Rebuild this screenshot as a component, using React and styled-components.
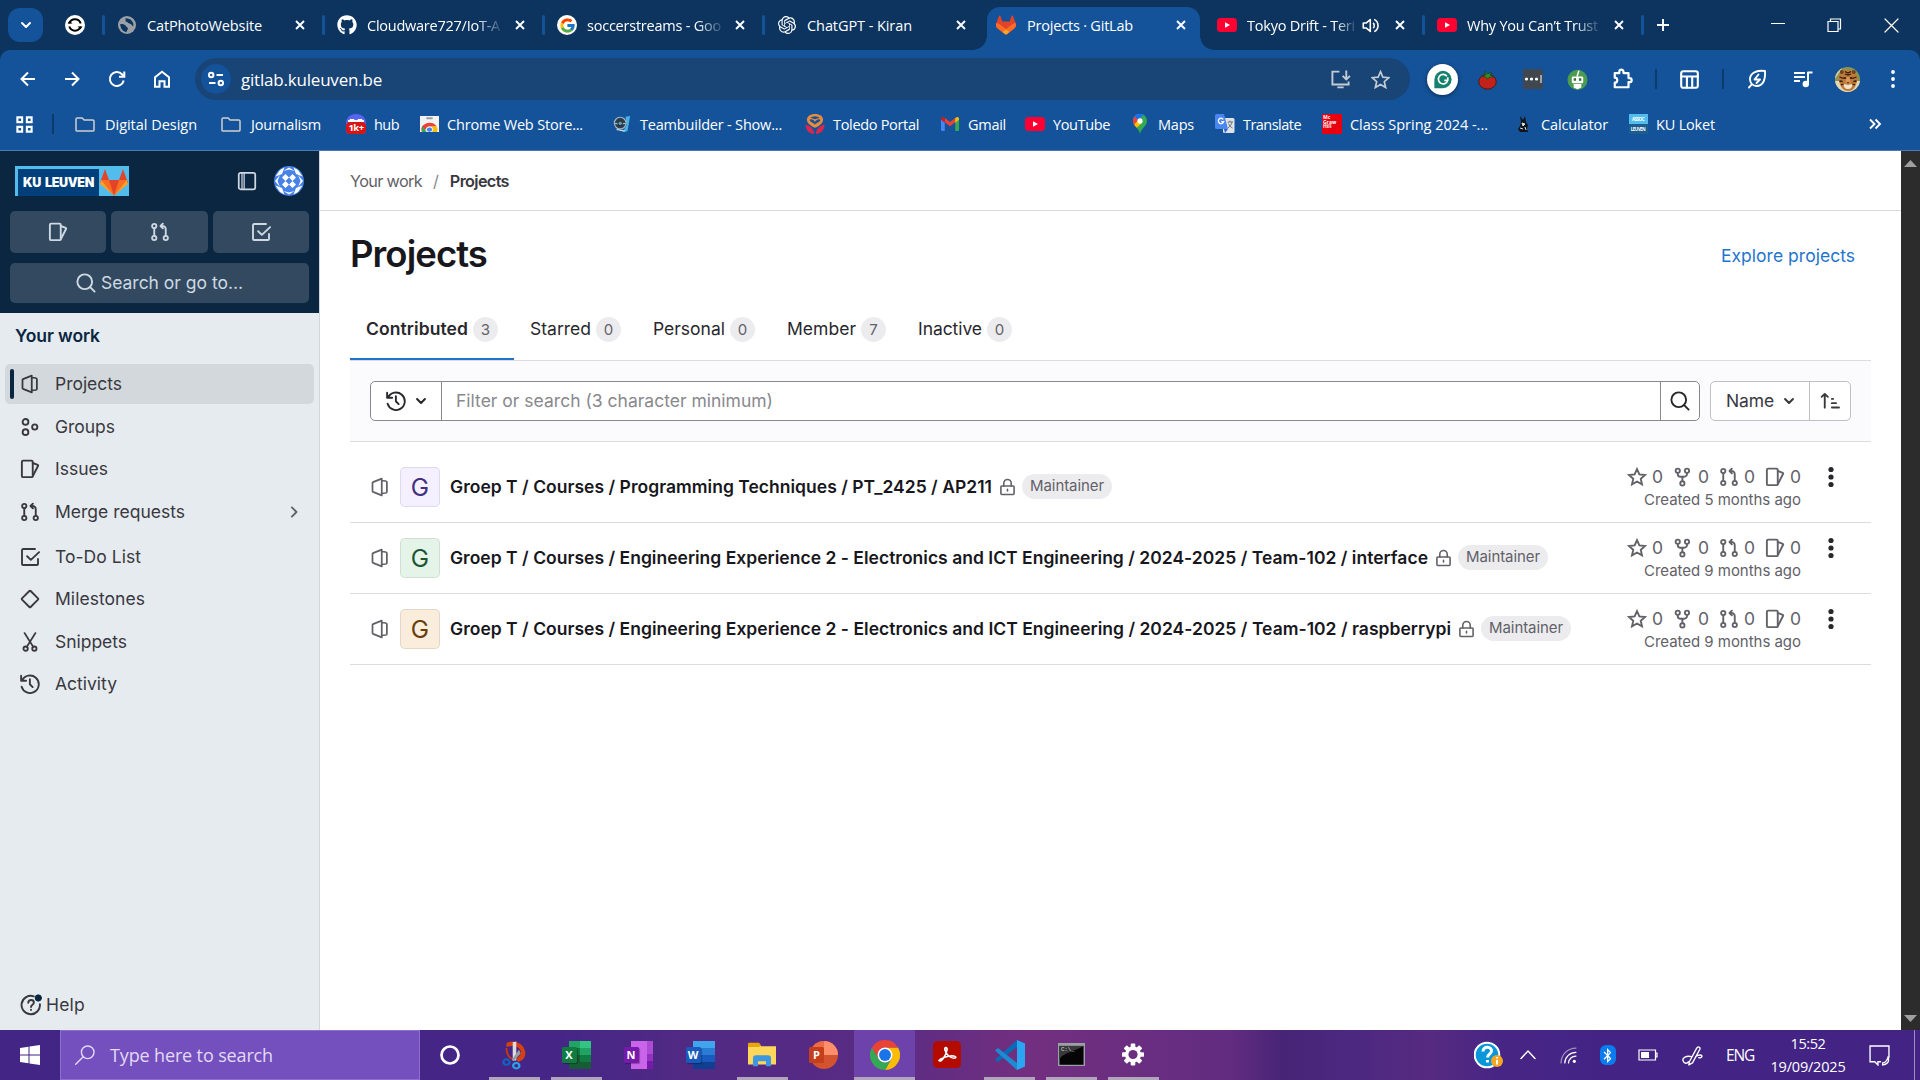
import React, { useLayoutEffect, useRef } from 'react';
import styled, { createGlobalStyle } from 'styled-components';
import { FcGoogle } from 'react-icons/fc';
import { FaGithub, FaBluetoothB } from 'react-icons/fa';
import { SiOpenai } from 'react-icons/si';

const UI = '"Open Sans", "Noto Sans", sans-serif';
const GL = 'Inter, "Noto Sans", sans-serif';

const Global = createGlobalStyle`
  * { box-sizing: border-box; }
  body { margin: 0; background: #fff; }
  svg { display: block; flex: none; }
`;

/* ---------- shared ---------- */
const Label = styled.span`
  display: block;
  flex: none;
  white-space: pre;
  width: ${p => (p.$w ? p.$w + 'px' : 'auto')};
  mask-image: ${p => (p.$fade ? 'linear-gradient(90deg,#000 82%,rgba(0,0,0,.15) 100%)' : 'none')};
`;

/* Tracks its text so that it fills exactly `w` pixels. */
function Fit({ w, fade, children }) {
  const ref = useRef(null);
  useLayoutEffect(() => {
    const el = ref.current;
    el.style.letterSpacing = '0px';
    const r = document.createRange();
    r.selectNodeContents(el);
    const n = el.textContent.length;
    el.style.letterSpacing = (w - r.getBoundingClientRect().width) / n + 'px';
  }, [w, children]);
  return <Label ref={ref} $w={w} $fade={fade}>{children}</Label>;
}

const Svg = ({ s = 20, vb = 16, w = 1.5, h, children, ...r }) => (
  <svg width={s} height={h || s} viewBox={typeof vb === 'string' ? vb : `0 0 ${vb} ${vb}`} fill="none"
    stroke="currentColor" strokeWidth={w} strokeLinecap="round" strokeLinejoin="round" {...r}>{children}</svg>
);

const Slot = styled.div`
  flex: none;
  width: ${p => p.$w}px;
  display: flex;
  align-items: center;
  justify-content: center;
`;

const Spacer = styled.div`
  flex: ${p => (p.$w ? 'none' : 1)};
  width: ${p => p.$w || 0}px;
`;

/* ---------- GitLab icons ---------- */
const IssueI = p => <Svg {...p}><rect x="1.5" y="1.3" width="8.7" height="13.2" rx="1" /><path d="M10.2 3.2l4 1.5c.3.1.4.4.3.7l-4.1 8" /></Svg>;
const MergeI = p => <Svg {...p}><circle cx="3.4" cy="3.2" r="1.7" /><circle cx="3.4" cy="12.8" r="1.7" /><circle cx="12.6" cy="12.8" r="1.7" /><path d="M3.4 5v6M12.6 11V5.7a2.5 2.5 0 0 0-2.5-2.5H8.6M10.3 1.3L8.4 3.2l1.9 1.9" /></Svg>;
const TodoI = p => <Svg {...p}><path d="M12 1.6H2.5a.9.9 0 0 0-.9.9v11c0 .5.4.9.9.9h11c.5 0 .9-.4.9-.9V9.6M5.7 7.4l3 2.9 6.6-6.2" /></Svg>;
const ProjectI = p => <Svg {...p} w={1.4}><path d="M9.4 1.3v13.400l-7-2.800a.6.6 0 0 1-.4-.6V4.700c0-.3.1-.5.4-.6zM9.600 2.800l2.900.4c.6.1 1 .5 1 1v7.600c0 .5-.4.9-1 1l-2.900.4" /></Svg>;
const GroupI = p => <Svg {...p}><circle cx="4.4" cy="3.9" r="2.3" /><circle cx="4.4" cy="12.1" r="2.3" /><circle cx="11.8" cy="8" r="2.1" /></Svg>;
const MilestoneI = p => <Svg {...p}><path d="M7.5 1.6a.7.7 0 0 1 1 0l5.9 5.9a.7.7 0 0 1 0 1l-5.9 5.9a.7.7 0 0 1-1 0L1.600 8.500a.7.7 0 0 1 0-1z" /></Svg>;
const SnippetI = p => <Svg {...p}><circle cx="4.5" cy="13.3" r="1.7" /><circle cx="11.5" cy="13.3" r="1.7" /><path d="M3.7.9l6.900 11M12.300.9L5.400 11.900" /></Svg>;
const HistoryI = p => <Svg {...p}><path d="M1.700 5.200A7 7 0 1 1 1.300 10.200M.9 1.400v4h4M7.900 4.200v4l2.200 2.300" /></Svg>;
const SearchI = p => <Svg {...p}><circle cx="7" cy="7" r="5.900" /><path d="M11.300 11.300l3.600 3.600" /></Svg>;
const StarI = p => <Svg {...p}><path d="M8 1.700l1.900 4.200 4.500.5-3.400 3 1 4.500L8 11.600l-4 2.300 1-4.500-3.400-3 4.500-.5z" strokeLinejoin="miter" /></Svg>;
const ForkI = p => <Svg {...p}><circle cx="3.800" cy="3" r="1.700" /><circle cx="11.200" cy="3" r="1.700" /><circle cx="7.500" cy="13.100" r="1.700" /><path d="M3.800 4.800v.7a2.300 2.300 0 0 0 2.300 2.300h2.800a2.300 2.300 0 0 0 2.300-2.300v-.7M7.500 8v3.300" /></Svg>;
const LockI = p => <Svg {...p}><rect x="1.800" y="7" width="12.400" height="8" rx=".8" /><path d="M4.500 7V4.500a3.500 3.500 0 0 1 7 0V7M8 10.200v1.600" /></Svg>;
const ChevI = p => <Svg {...p}><path d="M4.500 6.300L8 9.800l3.500-3.500" /></Svg>;
const ChevR = p => <Svg {...p}><path d="M6.300 4.300L10 8l-3.700 3.700" /></Svg>;
const SortI = p => <Svg {...p}><path d="M3.800 13.300V2.500M1.300 4.700l2.500-2.400 2.500 2.400M9.500 6.300h1M9.500 9.700h3.300M9.500 13.200h5.700" /></Svg>;

const Tanuki = ({ s = 22 }) => (
  <svg width={s} height={s} viewBox="0 0 25 24">
    <path d="m24.507 9.5-.034-.09L21.082.562a.896.896 0 0 0-1.694.091l-2.29 7.01H7.825L5.535.653a.898.898 0 0 0-1.694-.09L.451 9.411.416 9.5a6.297 6.297 0 0 0 2.09 7.278l.042.032 5.160 3.867 2.560 1.935 1.554 1.176a1.051 1.051 0 0 0 1.268 0l1.555-1.176 2.560-1.935 5.197-3.890.014-.01A6.297 6.297 0 0 0 24.507 9.500Z" fill="#E24329" />
    <path d="m24.507 9.5-.034-.09a11.440 11.440 0 0 0-4.560 2.051l-7.447 5.632 4.742 3.584 5.197-3.890.014-.01A6.297 6.297 0 0 0 24.507 9.500Z" fill="#FC6D26" />
    <path d="m7.707 20.677 2.560 1.935 1.555 1.176a1.051 1.051 0 0 0 1.268 0l1.555-1.176 2.560-1.935-4.743-3.584-4.755 3.584Z" fill="#FCA326" />
    <path d="M5.010 11.461a11.430 11.430 0 0 0-4.560-2.050L.416 9.500a6.297 6.297 0 0 0 2.090 7.278l.042.032 5.160 3.867 4.745-3.584-7.443-5.632Z" fill="#FC6D26" />
  </svg>
);

/* ---------- browser tab strip ---------- */
const Screen = styled.div`
  width: 1920px;
  height: 1080px;
  overflow: hidden;
  display: flex;
  flex-direction: column;
  font-family: ${UI};
`;
const Strip = styled.div`
  height: 50px;
  flex: none;
  background: #0c345f;
  color: #fff;
  display: flex;
  align-items: center;
  padding-left: 8px;
  font-size: 14.5px;
`;
const TabMenu = styled.div`
  width: 35px;
  height: 34px;
  border-radius: 12px;
  background: #14539a;
  display: flex;
  align-items: center;
  justify-content: center;
`;
const TabBox = styled.div`
  width: ${p => p.$w}px;
  height: 50px;
  flex: none;
  display: flex;
  align-items: center;
  padding: 0 16px 0 12px;
`;
const TabSep = styled.div`
  width: 3px;
  height: 20px;
  flex: none;
  border-radius: 2px;
  background: ${p => (p.$off ? 'transparent' : '#14539a')};
`;
const ActiveTab = styled.div`
  flex: none;
  width: 213px;
  height: 43px;
  margin: 7px 2px 0 4px;
  padding: 0 13px 7px 9px;
  background: #14539a;
  border-radius: 13px 13px 0 0;
  display: flex;
  align-items: center;
  position: relative;
  &::before, &::after {
    content: '';
    position: absolute;
    bottom: 0;
    width: 14px;
    height: 14px;
  }
  &::before { left: -14px; background: radial-gradient(circle at 0 0, transparent 13.500px, #14539a 14px); }
  &::after { right: -14px; background: radial-gradient(circle at 100% 0, transparent 13.500px, #14539a 14px); }
`;
const CloseX = () => <Svg s={12} vb={12} w={1.9}><path d="M2 2l8 8M10 2l-8 8" strokeLinecap="butt" /></Svg>;
const YT = () => <svg width="20" height="14" viewBox="0 0 20 14"><rect width="20" height="14" rx="3.500" fill="#f03" /><path d="M8 4.200l5 2.800-5 2.800z" fill="#fff" /></svg>;
const Globe = () => (
  <svg width="18" height="18" viewBox="0 0 20 20"><circle cx="10" cy="10" r="10" fill="#9aa0a6" />
    <path d="M2.500 9c3 0 6 .5 6.500 2.500.4 1.500 2 .8 2 2.500 0 1.500-1.500 2-1.500 4-4-.5-7-4-7-9zM8 2.500c1.500 2-1 3 1.500 4 2 .8 1.500 2 4 2 2 .1 1.500 2.500 3.500 3 1-4-2-9-9-9z" fill="#0c345f" /></svg>
);

function Tab({ icon, text, tw, fade, w, audio, off }) {
  return (
    <>
      <TabSep $off={off} />
      <TabBox $w={w}>
        <Slot $w={20}>{icon}</Slot>
        <Spacer $w={10} />
        <Fit w={tw} fade={fade}>{text}</Fit>
        <Spacer />
        {audio && <><Svg s={17} w={1.5}><path d="M1.200 5.700v4.600h2.600l4 3.300V2.400l-4 3.300zM10.500 5.500a3.500 3.500 0 0 1 0 5M11.500 2.200a6.500 6.500 0 0 1 0 11.600" strokeLinecap="butt" /></Svg><Spacer $w={15} /></>}
        <CloseX />
      </TabBox>
    </>
  );
}

const Disc = styled.div`
  width: 20px;
  height: 20px;
  border-radius: 50%;
  background: #fff;
  display: flex;
  align-items: center;
  justify-content: center;
`;

function TabStrip() {
  return (
    <Strip>
      <TabMenu><Svg s={14} vb={14} w={2}><path d="M3 5l4 4 4-4" /></Svg></TabMenu>
      <Slot $w={59}>
        <Spacer $w={5} />
        <svg width="20" height="20" viewBox="0 0 20 20"><circle cx="10" cy="10" r="10" fill="#fff" /><path d="M4.300 8.500a6 6 0 0 1 11.400 0M15.700 11.500a6 6 0 0 1-11.400 0" stroke="#000" strokeWidth="2" fill="none" /><path d="M2.500 8.500h5l-3-2.800zM17.500 11.500h-5l3 2.800z" fill="#000" /></svg>
      </Slot>
      <Tab w={217} icon={<Globe />} text="CatPhotoWebsite" tw={115} />
      <Tab w={217} icon={<FaGithub size={20} />} text="Cloudware727/IoT-A" tw={133} fade />
      <Tab w={217} icon={<Disc><FcGoogle size={17} /></Disc>} text="soccerstreams - Goo" tw={134} fade />
      <Tab w={218} icon={<SiOpenai size={18} />} text="ChatGPT - Kiran" tw={105} />
      <ActiveTab>
        <Tanuki s={20} />
        <Spacer $w={11} />
        <Fit w={106}>Projects · GitLab</Fit>
        <Spacer />
        <CloseX />
      </ActiveTab>
      <Tab off w={217} icon={<YT />} text="Tokyo Drift - Teri" tw={108} fade audio />
      <Tab w={216} icon={<YT />} text="Why You Can’t Trust" tw={131} fade />
      <TabSep />
      <Slot $w={38}><Svg s={14} vb={14} w={1.9}><path d="M7 1v12M1 7h12" strokeLinecap="butt" /></Svg></Slot>
      <Spacer />
      <Slot $w={57}><Svg s={14} vb={14} w={1.200}><path d="M0 5.500h14" /></Svg></Slot>
      <Slot $w={57}><Svg s={15} vb={15} w={1.200}><path d="M1 3.500h10v10H1zM3.500 3.500V1h10v10H11" strokeLinejoin="miter" /></Svg></Slot>
      <Slot $w={57}><Svg s={15} vb={15} w={1.200}><path d="M1 1l13 13M14 1L1 14" /></Svg></Slot>
    </Strip>
  );
}

/* ---------- toolbar ---------- */
const Corner = styled.div`
  flex: none;
  background: #0c345f;
`;
const Bar = styled.div`
  height: 58px;
  background: #14539a;
  color: #fff;
  display: flex;
  align-items: center;
  padding-left: 5px;
  border-radius: 10px 10px 0 0;
`;
const Omnibox = styled.div`
  width: 1215px;
  height: 42px;
  margin: 0 10px;
  padding: 0 20px 0 6px;
  flex: none;
  display: flex;
  align-items: center;
  border-radius: 21px;
  background: #184476;
  font-size: 17px;
`;
const SiteInfo = styled.div`
  width: 30px;
  height: 30px;
  margin-right: 10px;
  border-radius: 50%;
  background: #14539a;
  display: flex;
  align-items: center;
  justify-content: center;
`;
const Rule = styled.div`
  width: 2px;
  height: ${p => p.$h || 20}px;
  flex: none;
  background: #0c3a6d;
`;
const Grammarly = styled.div`
  width: 31px;
  height: 31px;
  border-radius: 50%;
  background: #fff;
  display: flex;
  align-items: center;
  justify-content: center;
  box-shadow: 0 1px 4px rgba(0,0,0,.5);
`;

function Toolbar() {
  return (
    <Corner>
      <Bar>
        <Slot $w={45}><Svg s={18} vb={18} w={2}><path d="M16 9H3M9 2.500L2.500 9 9 15.500" strokeLinecap="butt" strokeLinejoin="miter" /></Svg></Slot>
        <Slot $w={44}><Svg s={18} vb={18} w={2}><path d="M2 9h13M9 2.500L15.500 9 9 15.500" strokeLinecap="butt" strokeLinejoin="miter" /></Svg></Slot>
        <Slot $w={46}><Svg s={18} vb={18} w={2}><path d="M15.700 10.500A7 7 0 1 1 14 4.200l2 2.200M16.300 1.500v5.300h-5.300" strokeLinecap="butt" strokeLinejoin="miter" /></Svg></Slot>
        <Slot $w={44}><Svg s={18} vb={18} w={2}><path d="M2 7.200L9 1.700l7 5.500v9.500h-4.500v-5.500h-5v5.500H2z" strokeLinejoin="miter" /></Svg></Slot>
        <Spacer $w={1} />
        <Omnibox>
          <SiteInfo><Svg s={18} vb={18} w={2}><circle cx="4.200" cy="5" r="2.200" /><path d="M9.500 5H16M2 13h6.500" strokeLinecap="butt" /><circle cx="13.800" cy="13" r="2.200" /></Svg></SiteInfo>
          <Fit w={141}>gitlab.kuleuven.be</Fit>
          <Spacer />
          <Svg s={21} vb={20} w={1.800} color="#c3cbd4"><path d="M9 2.500H2.300v12.300h15.400V12M15.500 1.500v8M12 6.500l3.500 3.500L19 6.500M7 17.500h6" strokeLinecap="butt" strokeLinejoin="miter" /></Svg>
          <Spacer $w={20} />
          <Svg s={19} vb={20} w={1.800} color="#c3cbd4"><path d="M10 1.800l2.500 5.800 6.200.5-4.700 4.200 1.400 6.100L10 15.200l-5.400 3.200L6 12.300 1.300 8.100l6.200-.5z" strokeLinejoin="miter" /></Svg>
        </Omnibox>
        <Slot $w={45}><Grammarly><svg width="20" height="19" viewBox="0 0 22 22"><path d="M1 21V11a10 10 0 1 1 10 10z" fill="#15806c" /><path d="M15.500 7.200A5.500 5.500 0 1 0 16.500 12h-4M16.500 8.500v4" stroke="#fff" strokeWidth="1.900" fill="none" /></svg></Grammarly></Slot>
        <Slot $w={45}><svg width="19" height="21" viewBox="0 0 20 24" preserveAspectRatio="none"><ellipse cx="10" cy="14.500" rx="9.200" ry="8.500" fill="#c3221a" stroke="#4a1512" /><path d="M4 8.500l4-2-1-4 3 3L14 4l-1 3 4 2-5 .5-2 2-2-2.500z" fill="#2e8b2e" stroke="#143d14" strokeWidth=".7" /></svg></Slot>
        <Slot $w={45}><svg width="20" height="20" viewBox="0 0 20 20"><rect width="20" height="20" rx="2" fill="#40474f" /><circle cx="3.500" cy="10" r="1.600" fill="#fff" /><circle cx="8.500" cy="10" r="1.600" fill="#fff" /><circle cx="13.500" cy="10" r="1.600" fill="#fff" /><path d="M18 6v8" stroke="#fff" /></svg></Slot>
        <Slot $w={45}><svg width="21" height="21" viewBox="0 0 22 25" preserveAspectRatio="none"><ellipse cx="11" cy="13" rx="10.500" ry="12" fill="#4c9c50" /><path d="M10.500 9l2-7" stroke="#fff" strokeWidth="1.600" /><rect x="5" y="9" width="12" height="8" rx="1.500" fill="#fff" /><rect x="7" y="11" width="2.500" height="3" fill="#2d6e31" /><rect x="12.500" y="11" width="2.500" height="3" fill="#2d6e31" /><path d="M7 18h8v4l-4 2-4-2z" fill="#fff" /></svg></Slot>
        <Slot $w={46}><Svg s={22} vb={24} w={2.400}><path d="M3 5.500h5V4a2 2 0 0 1 4.500 0v1.500H18v5.500h1.200a2 2 0 0 1 0 4.500H18V21H3v-5a2.500 2.500 0 0 0 0-5.500z" /></Svg></Slot>
        <Slot $w={20}><Rule /></Slot>
        <Slot $w={47}><Svg s={19} vb={19} w={2.100}><rect x="1.200" y="1.200" width="16.600" height="16.600" rx="2" /><path d="M1.200 6.500h16.600M6.900 6.500v11M12.200 6.500v11" /></Svg></Slot>
        <Slot $w={20}><Rule /></Slot>
        <Slot $w={47}><Svg s={20} vb={20} w={1.900}><path d="M2 18.500l2.500-2.800M18 2c-7-.8-15 1-15 8.300 0 4 3 6.700 6.500 6.700C16.500 17 18.500 10 18 2zM11.500 5.500L7.500 10.500h5.500l-3.500 3.500" /></Svg></Slot>
        <Slot $w={45}><Svg s={20} vb={20} w={2}><path d="M1 4h11M1 8h11M1 12h6" strokeLinecap="butt" /><path d="M15 15V3.500h4.500" strokeLinecap="butt" /><circle cx="12.800" cy="15" r="2.200" fill="currentColor" /></Svg></Slot>
        <Slot $w={45}><svg width="25" height="25" viewBox="0 0 25 25"><clipPath id="av"><circle cx="12.500" cy="12.500" r="12.500" /></clipPath><g clipPath="url(#av)"><rect width="25" height="25" fill="#8f9150" /><path d="M0 0h8L0 12z" fill="#d9cf9a" /><path d="M0 14h25v11H0z" fill="#e4d7b8" /><path d="M4 14C3 8 6 3 13 3s10 5 9 11-4 10-9 10-8-5-9-10z" fill="#bf7a3a" /><circle cx="6.800" cy="5" r="2" fill="#6b4521" /><circle cx="18.800" cy="5" r="2" fill="#6b4521" /><path d="M10 4.500l3 1.500 3-1.500M10 7l3 1 3-1M4.500 10l4 1.500M21.500 10l-4 1.500M4.500 14l3 .5M21.500 14l-3 .5M6 18l2.500-1M20 18l-2.500-1" stroke="#2b1b0e" strokeWidth="1.300" fill="none" /><path d="M8.500 11h3M14.500 11h3" stroke="#20140a" strokeWidth="1.600" /><path d="M11.500 10h3l1 6-2.500 2-2.500-2z" fill="#d89a58" /><path d="M9 17l4 1 4-1c1 3-1.500 5-4 5s-5-2-4-5z" fill="#f0e2cb" /><path d="M11.300 15h3.400L13 17.300z" fill="#7a3d2c" /></g></svg></Slot>
        <Slot $w={45}><Svg s={18} vb={18} stroke="none" fill="currentColor"><circle cx="9" cy="2" r="1.900" /><circle cx="9" cy="9" r="1.900" /><circle cx="9" cy="16" r="1.900" /></Svg></Slot>
      </Bar>
    </Corner>
  );
}

/* ---------- bookmarks ---------- */
const Marks = styled.div`
  height: 43px;
  flex: none;
  padding: 0 0 10px 15px;
  display: flex;
  align-items: center;
  background: #14539a;
  border-bottom: 1px solid #4a7ab5;
  color: #fff;
  font-size: 14.500px;
`;
const Mark = styled.div`
  width: ${p => p.$w}px;
  height: 24px;
  flex: none;
  display: flex;
  align-items: center;
  gap: ${p => p.$gap || 8}px;
`;
const McGraw = styled.div`
  width: 20px;
  height: 20px;
  padding: 1px;
  background: #e8000f;
  font: 700 5px/4.600px ${UI};
`;
const Unread = styled.div`
  width: 20px;
  height: 20px;
  display: flex;
  flex-direction: column;
  justify-content: flex-end;
  background: radial-gradient(ellipse 4px 2px at 6px 7px, #fff 90%, transparent), radial-gradient(ellipse 4px 2px at 14px 7px, #fff 90%, transparent), #5865f2;
  border-radius: 9px 9px 4px 4px;
`;
const UnreadCount = styled.div`
  height: 12px;
  border-radius: 4px;
  background: #d81515;
  font: 700 9.500px/12px ${UI};
  text-align: center;
  letter-spacing: -.6px;
`;
const Folder = () => <Svg s={20} h={15} vb="0 0 20 15" w={1.500} color="#cfcfcf"><path d="M1 2A1.200 1.200 0 0 1 2.200.9h5l1.900 2h8.700A1.200 1.200 0 0 1 19 4.100v8.800a1.200 1.200 0 0 1-1.200 1.200H2.200A1.200 1.200 0 0 1 1 12.900z" /></Svg>;
const Chrome = ({ s }) => (
  <svg width={s} height={s} viewBox="0 0 48 48"><path d="M24 12h20.800A24 24 0 0 1 24 48l10.400-18z" fill="#fbbc04" /><path d="M3.200 12L13.600 30A12 12 0 0 0 34.400 30L24 48A24 24 0 0 1 3.200 12z" fill="#34a853" /><path d="M3.200 12L13.600 30A12 12 0 0 1 24 12h20.800A24 24 0 0 0 3.200 12z" fill="#ea4335" /><circle cx="24" cy="24" r="12" fill="#fff" /><circle cx="24" cy="24" r="9.500" fill="#1a73e8" /></svg>
);
const WebStore = () => <svg width="19" height="16" viewBox="0 0 20 20" preserveAspectRatio="none"><rect width="20" height="20" fill="#f1f3f4" /><rect x="6.500" y="1.500" width="7" height="2.500" rx="1" fill="#9aa0a6" /><path d="M2 20a8.500 8.500 0 0 1 1-8 8.500 8.500 0 0 1 14.500 1H10a4.500 4.500 0 0 0-4 4z" fill="#ea4335" /><path d="M2.500 12.500L7 20H2z" fill="#34a853" /><path d="M17.500 13H12l2 4-1.500 3H18a8 8 0 0 0-.5-7z" fill="#fbbc04" /><circle cx="10" cy="17" r="3.300" fill="#4285f4" stroke="#fff" /></svg>;
const Showdown = () => <svg width="18" height="18" viewBox="0 0 20 20"><path d="M14 2l5-1-1 6-2 11-5 1 4-8z" fill="#49b3e6" /><path d="M4 16l9 2" stroke="#c9dbe6" strokeWidth="1.500" /><circle cx="8" cy="9" r="6.500" fill="#2b3c4c" stroke="#9db6c4" strokeWidth="1.300" /><path d="M2 9.500h12" stroke="#9db6c4" strokeWidth="1.500" /><circle cx="8" cy="9.300" r="2.500" fill="#6f99ad" stroke="#16242e" /></svg>;
const Toledo = () => <svg width="20" height="20" viewBox="0 0 20 21"><path d="M10 0C5 0 1.500 2.500 1.500 6S6 13 10 14.500C14 13 18.500 9.500 18.500 6S15 0 10 0z" fill="#e98a3c" /><path d="M10 8.500C8.500 5 4.500 5 4.500 6.500S8 9 10 11c2-2 5.500-3 5.500-4.500S11.500 5 10 8.500zM5 4q5-3.500 10 0l-5 1.500z" fill="#14539a" /><path d="M0 11c0 6 4 9.500 9 10 .5-4-3-8-9-10zM20 11c0 6-4 9.500-9 10-.5-4 3-8 9-10z" fill="#d9274f" /></svg>;
const Gmail = () => <svg width="18" height="14" viewBox="0 0 19 15" preserveAspectRatio="none"><path d="M0 2v11.500A1.300 1.300 0 0 0 1.300 15H4V5z" fill="#4285f4" /><path d="M19 2v11.500A1.300 1.300 0 0 1 17.700 15H15V5z" fill="#34a853" /><path d="M4 5.500V1.200l5.500 4.200L15 1.200v4.300L9.500 10z" fill="#ea4335" /><path d="M0 2C0 0 2-.6 3.400.7L4 1.200v5L0 3z" fill="#c5221f" /><path d="M19 2c0-2-2-2.600-3.400-1.300l-.6.500v5L19 3z" fill="#fbbc04" /></svg>;
const MapsPin = () => <svg width="14" height="20" viewBox="0 0 14 20"><path d="M7 20c-.7-3-1.500-4-3.300-6.300C1.500 11 0 9.500 0 6.800A7 7 0 0 1 14 6.800c0 3-1.500 4.500-3.500 7C8.700 16 7.700 17 7 20z" fill="#34a853" /><path d="M1 10.500L10.500 0.700A7 7 0 0 0 0 6.800c0 1.500.4 2.600 1 3.700z" fill="#4285f4" /><path d="M0 6.800a7 7 0 0 1 1.600-4.500L7 7 3 13C1.500 11 0 9.500 0 6.800z" fill="#ea4335" /><path d="M1 10.500L6.500 5 9 9l-5.300 4.700C2.600 12.300 1.600 11.600 1 10.500z" fill="#fbbc04" /><path d="M1.600 2.300A7 7 0 0 1 10.500.7L5 6z" fill="#1a73e8" /><circle cx="7" cy="6.900" r="2.600" fill="#fff" /></svg>;
const Translate = () => (
  <svg width="20" height="20" viewBox="0 0 20 20">
    <rect x="8" y="4" width="11.500" height="15" rx="1.500" fill="#dfe3e8" />
    <path d="M1.500 0H9l4 15H1.500A1.500 1.500 0 0 1 0 13.500v-12A1.500 1.500 0 0 1 1.500 0z" fill="#4a86f0" />
    <path d="M9 15h4l-3 4z" fill="#2f5fc4" />
    <path d="M8.300 5.400A2.700 2.700 0 1 0 8.700 7.600H6.200" stroke="#fff" strokeWidth="1.300" fill="none" />
    <path d="M12.500 8h5.500M15 6.500V8M17 8c-.5 2.500-2 4.500-4 6M13.500 9.500c.8 2 2 3.500 4 4.500" stroke="#6b7078" fill="none" />
  </svg>
);
const Loket = styled.div`
  width: 19px;
  height: 20px;
  background: linear-gradient(#52bdec 0 50%, #1d5c8e 50%);
  font: 700 4.500px/10px ${UI};
  letter-spacing: -.5px;
  text-align: center;
`;
const Rabbit = () => <svg width="12" height="18" viewBox="0 0 12 18"><path d="M4 7L3 1l3 4 2-4 1 6 2 3-1 4 1 3H3l-2-3 2-3z" fill="#10151b" /><path d="M5 8l3 1-2 2zM3 13l3 1M8 12l1 3" stroke="#d6dde4" fill="#d6dde4" /></svg>;

const marks = [
  [146, <Folder />, 'Digital Design', 92, 10],
  [125, <Folder />, 'Journalism', 70, 10],
  [73, <Unread><UnreadCount>1k+</UnreadCount></Unread>, 'hub', 25],
  [193, <WebStore />, 'Chrome Web Store...', 136],
  [193, <Showdown />, 'Teambuilder - Show...', 142],
  [135, <Toledo />, 'Toledo Portal', 86],
  [85, <Gmail />, 'Gmail', 38],
  [105, <YT />, 'YouTube', 57],
  [85, <MapsPin />, 'Maps', 36],
  [107, <Translate />, 'Translate', 58],
  [191, <McGraw>Mc<br />Graw<br />Hill</McGraw>, 'Class Spring 2024 -...', 138],
  [115, <Rabbit />, 'Calculator', 67],
  [120, <Loket>ASSOC<br />LEUVEN</Loket>, 'KU Loket', 59],
];

function Bookmarks() {
  return (
    <Marks>
      <Svg s={19} vb={20} w={2.200} strokeLinejoin="miter"><path d="M2.500 2.500h5v5h-5zM12.500 2.500h5v5h-5zM2.500 12.500h5v5h-5zM12.500 12.500h5v5h-5z" /></Svg>
      <Spacer $w={18} />
      <Rule $h={20} />
      <Spacer $w={21} />
      {marks.map(([w, icon, t, tw, gap]) => (
        <Mark key={t} $w={w} $gap={gap}><Slot $w={20}>{icon}</Slot><Fit w={tw}>{t}</Fit></Mark>
      ))}
      <Spacer />
      <Svg s={14} vb={14} w={1.900}><path d="M2 2.500L6.500 7 2 11.500M7.500 2.500L12 7l-4.500 4.500" strokeLinecap="butt" strokeLinejoin="miter" /></Svg>
      <Spacer $w={38} />
    </Marks>
  );
}

/* ---------- GitLab sidebar ---------- */
const Page = styled.div`
  height: 879px;
  flex: none;
  display: flex;
  font-family: ${GL};
  font-size: 17.500px;
  color: #3a383f;
  & ${Label} { margin-bottom: 2px; }
`;
const Side = styled.aside`
  width: 320px;
  flex: none;
  display: flex;
  flex-direction: column;
  background: #e6ebf0;
  border-right: 1px solid #d0d6dc;
`;
const SideTop = styled.div`
  height: 162px;
  padding: 15px 10px 10px;
  background: #0a2640;
  color: #ced9e4;
  display: flex;
  flex-direction: column;
  gap: 10px;
`;
const BrandRow = styled.div`
  height: 35px;
  padding: 0 5px 5px;
  display: flex;
  align-items: center;
`;
const Brand = styled.div`
  width: 114px;
  height: 30px;
  padding: 3px 0 0 3px;
  background: #52bdec;
  display: flex;
  gap: 1px;
`;
const BrandText = styled.div`
  width: 81px;
  height: 27px;
  padding: 2px 0 0 5px;
  background: #00407a;
  color: #fff;
  display: flex;
  align-items: center;
  gap: 4px;
  font: 900 12.500px Inter, sans-serif;
`;
const Shortcuts = styled.div`
  display: grid;
  grid-template-columns: 96px 97px 96px;
  gap: 5px;
`;
const TopButton = styled.div`
  height: ${p => p.$h}px;
  border-radius: 5px;
  background: #33495f;
  display: flex;
  align-items: center;
  justify-content: center;
  gap: 5px;
`;
const SideTitle = styled.div`
  height: 51px;
  padding: 12px 0 0 15px;
  font-weight: 600;
  line-height: 22px;
  color: #0a2640;
`;
const NavItem = styled.div`
  height: 40px;
  margin: 0 5px ${p => p.$mb}px;
  padding: 0 10px 0 5px;
  border-radius: 5px;
  background: ${p => (p.$on ? '#d3d8dc' : 'transparent')};
  display: flex;
  align-items: center;
`;
const Pip = styled.div`
  width: 4px;
  height: 30px;
  margin-right: 6px;
  border-radius: 2px;
  background: ${p => (p.$on ? '#0a2640' : 'transparent')};
`;
const Help = styled.div`
  height: 50px;
  padding: 0 0 0 20px;
  display: flex;
  align-items: center;
  gap: 4px;
`;

const nav = [
  [ProjectI, 'Projects', 67, 3], [GroupI, 'Groups', 60, 2], [IssueI, 'Issues', 53, 3],
  [MergeI, 'Merge requests', 130, 5], [TodoI, 'To-Do List', 86, 2], [MilestoneI, 'Milestones', 90, 3],
  [SnippetI, 'Snippets', 72, 2], [HistoryI, 'Activity', 62, 0],
];

function Sidebar() {
  return (
    <Side>
      <SideTop>
        <BrandRow>
          <Brand>
            <BrandText><Fit w={18}>KU</Fit><Fit w={49}>LEUVEN</Fit></BrandText>
            <svg width="28" height="27" viewBox="0 0 28 27"><path d="M5 0L0 14l14 12.500L28 14 23 0l-4 11H9z" fill="#e24329" /><path d="M9 11H1.300L14 26.500zM19 11h7.700L14 26.500z" fill="#fc6d26" /><path d="M1.300 11L0 15l14 11.500zM26.700 11L28 15 14 26.500z" fill="#fca326" /></svg>
          </Brand>
          <Spacer />
          <Svg s={20} w={1.400}><rect x="1.400" y="1.400" width="13.200" height="13.200" rx="1.500" /><path d="M4 1.400v13.200M5.700 1.400v13.200" strokeWidth="1" /></Svg>
          <Spacer $w={17} />
          <svg width="30" height="30" viewBox="0 0 30 30">
            <circle cx="15" cy="15" r="15" fill="#4682e8" />
            <g fill="#fff">
              <path d="M11.500 8l3.500 3.500L11.500 15 8 11.500zM18.500 8l3.500 3.500-3.500 3.500-3.500-3.500zM11.500 15l3.500 3.500-3.500 3.500L8 18.500zM18.500 15l3.500 3.500-3.500 3.500-3.500-3.500z" />
              <path d="M6 4l4.500-2.500L8 8 1.500 10.500zM24 4l-4.500-2.500L22 8l6.500 2.500zM6 26l4.500 2.500L8 22l-6.500-2.500zM24 26l-4.500 2.500L22 22l6.500-2.500z" />
              <path d="M15 1.500L9.500 5 15 3.500 20.500 5zM15 28.500L9.500 25l5.500 1.500 5.500-1.500zM1 15l5-6-2.500 6L6 21zM29 15l-5-6 2.500 6-2.500 6z" />
            </g>
          </svg>
        </BrandRow>
        <Shortcuts>
          <TopButton $h={42}><IssueI /></TopButton>
          <TopButton $h={42}><MergeI /></TopButton>
          <TopButton $h={42}><TodoI /></TopButton>
        </Shortcuts>
        <TopButton $h={40}><SearchI /><Fit w={142}>Search or go to…</Fit></TopButton>
      </SideTop>
      <SideTitle><Fit w={85}>Your work</Fit></SideTitle>
      {nav.map(([I, t, w, mb], i) => (
        <NavItem key={t} $on={i === 0} $mb={mb}>
          <Pip $on={i === 0} />
          <I /><Spacer $w={15} /><Fit w={w}>{t}</Fit>
          <Spacer />
          {i === 3 && <ChevR color="#626168" />}
        </NavItem>
      ))}
      <Spacer />
      <Help>
        <Svg s={22} w={1.400}><path d="M10 1.700A6.700 6.700 0 1 0 14.500 7.500M6 6.400c.1-1.300.9-2 2.100-2 1.200 0 2 .8 2 1.800 0 1.600-2.100 1.600-2.100 3.300M8 11.500v.1" /><circle cx="13.300" cy="2.900" r="2.300" fill="#0a2640" stroke="#0a2640" strokeWidth=".6" /></Svg>
        <Fit w={39}>Help</Fit>
      </Help>
    </Side>
  );
}

/* ---------- GitLab main ---------- */
const Main = styled.main`
  width: 1581px;
  flex: none;
  background: #fff;
`;
const Crumbs = styled.div`
  height: 60px;
  padding: 2px 0 0 30px;
  border-bottom: 1px solid #dcdcde;
  display: flex;
  align-items: center;
  gap: 10px;
  font-size: 16.250px;
  color: #626168;
  & b { font-weight: 600; color: #3a383f; }
`;
const Slash = styled.span`
  padding: 0 1px 2px;
  color: #89888d;
`;
const Content = styled.div`
  padding: 0 30px;
`;
const HeadRow = styled.div`
  height: 89px;
  display: flex;
  align-items: center;
  justify-content: space-between;
  padding: 0 16px 1px 0;
`;
const H1 = styled.h1`
  margin: 0;
  font-size: 36.500px;
  line-height: 44px;
  font-weight: 600;
  color: #18171d;
`;
const Explore = styled.a`
  padding-top: 2px;
  color: #1f75cb;
`;
const TabsRow = styled.div`
  height: 61px;
  display: flex;
  border-bottom: 1px solid #dcdcde;
`;
const PTab = styled.div`
  height: 60px;
  padding: 0 16px 1px;
  display: flex;
  align-items: center;
  gap: 5px;
  color: #28272d;
  font-weight: ${p => (p.$on ? 600 : 400)};
  box-shadow: ${p => (p.$on ? 'inset 0 -2px 0 #1f75cb' : 'none')};
`;
const Count = styled.span`
  width: 25px;
  height: 25px;
  margin-bottom: 1px;
  border-radius: 13px;
  background: #ececef;
  color: #626168;
  font-weight: 400;
  font-size: 15px;
  line-height: 25px;
  text-align: center;
`;
const FilterRow = styled.div`
  height: 81px;
  padding: 0 20px;
  background: #fbfafd;
  border-bottom: 1px solid #dcdcde;
  display: flex;
  align-items: center;
  gap: 10px;
`;
const Group = styled.div`
  height: 40px;
  display: flex;
  flex: ${p => (p.$grow ? 1 : 'none')};
  border: 1px solid ${p => p.$c};
  border-radius: 5px;
  background: #fff;
  color: #28272d;
`;
const Cell = styled.div`
  width: ${p => (p.$w ? p.$w + 'px' : 'auto')};
  flex: ${p => (p.$w ? 'none' : 1)};
  padding-left: ${p => p.$pl || 0}px;
  display: flex;
  align-items: center;
  justify-content: ${p => (p.$w ? 'center' : 'flex-start')};
  border-left: ${p => (p.$c ? '1px solid ' + p.$c : 'none')};
  color: ${p => p.$color || 'inherit'};
`;
const List = styled.div`
  padding-top: 10px;
`;
const Row = styled.div`
  height: 71px;
  padding: 0 20px;
  display: flex;
  align-items: center;
  border-bottom: 1px solid #dcdcde;
  color: #626168;
`;
const Avatar = styled.div`
  width: 40px;
  height: 40px;
  margin: 0 10px;
  border: 1px solid rgba(31,30,36,.1);
  border-radius: 5px;
  padding-bottom: 1px;
  background: ${p => p.$bg};
  color: ${p => p.$fg};
  font-size: 24.500px;
  display: flex;
  align-items: center;
  justify-content: center;
`;
const Title = styled.div`
  font-weight: 600;
  color: #18171d;
`;
const Role = styled.span`
  width: 90px;
  height: 25px;
  margin-bottom: 1px;
  border-radius: 13px;
  background: #ececef;
  font-size: 15px;
  display: flex;
  align-items: center;
  justify-content: center;
`;
const Meta = styled.div`
  width: 174px;
  display: flex;
  flex-direction: column;
  align-items: flex-end;
`;
const Stats = styled.div`
  height: 25px;
  display: flex;
  align-items: center;
  gap: 10px;
`;
const Stat = styled.span`
  width: 36px;
  display: flex;
  align-items: center;
  justify-content: space-between;
`;
const Zero = styled.span`
  padding-bottom: 1px;
`;
const Created = styled.div`
  height: 20px;
  line-height: 20px;
  font-size: 15px;
`;

const ptabs = [['Contributed', 102, 3], ['Starred', 61, 0], ['Personal', 72, 0], ['Member', 69, 7], ['Inactive', 64, 0]];
const EE = 'Groep T / Courses / Engineering Experience 2 - Electronics and ICT Engineering / 2024-2025 / Team-102 / ';
const rows = [
  ['Groep T / Courses / Programming Techniques / PT_2425 / AP211', 542, '#f4f0ff', '#41307d', 'Created 5 months ago'],
  [EE + 'interface', 978, '#e5f4e9', '#1f5632', 'Created 9 months ago'],
  [EE + 'raspberrypi', 1001, '#faeddc', '#6b3d0c', 'Created 9 months ago'],
];

function MainPane() {
  return (
    <Main>
      <Crumbs><Fit w={72}>Your work</Fit><Slash>/</Slash><b><Fit w={59}>Projects</Fit></b></Crumbs>
      <Content>
        <HeadRow><H1><Fit w={137}>Projects</Fit></H1><Explore><Fit w={134}>Explore projects</Fit></Explore></HeadRow>
        <TabsRow>
          {ptabs.map(([t, w, n], i) => <PTab key={t} $on={i === 0}><Fit w={w}>{t}</Fit><Count>{n}</Count></PTab>)}
        </TabsRow>
        <FilterRow>
          <Group $grow $c="#89888d">
            <Cell $w={70} $pl={3}><HistoryI /><Spacer $w={6} /><ChevI s={18} w={1.800} /></Cell>
            <Cell $c="#89888d" $pl={14} $color="#89888d"><Fit w={317}>Filter or search (3 character minimum)</Fit></Cell>
            <Cell $w={39} $c="#89888d"><SearchI /></Cell>
          </Group>
          <Group $c="#bfbfc3">
            <Cell $w={98} $pl={4} $color="#3a383f"><Fit w={48}>Name</Fit><Spacer $w={6} /><ChevI s={18} w={1.800} /></Cell>
            <Cell $w={41} $c="#bfbfc3" $color="#3a383f"><SortI /></Cell>
          </Group>
        </FilterRow>
        <List>
          {rows.map(([t, w, bg, fg, c]) => (
            <Row key={t}>
              <ProjectI />
              <Avatar $bg={bg} $fg={fg}>G</Avatar>
              <Title><Fit w={w}>{t}</Fit></Title>
              <Spacer $w={7} />
              <LockI s={17} h={18} />
              <Spacer $w={6} />
              <Role><Fit w={74}>Maintainer</Fit></Role>
              <Spacer />
              <Meta>
                <Stats>
                  {[StarI, ForkI, MergeI, IssueI].map((I, i) => <Stat key={i}><I /><Zero>0</Zero></Stat>)}
                </Stats>
                <Created><Fit w={157}>{c}</Fit></Created>
              </Meta>
              <Spacer $w={20} />
              <Svg s={20} h={22} vb="0 0 20 22" fill="#28272d" stroke="none" transform="translate(0 -10)"><circle cx="10" cy="3.500" r="2.600" /><circle cx="10" cy="11" r="2.600" /><circle cx="10" cy="18.500" r="2.600" /></Svg>
              <Spacer $w={10} />
            </Row>
          ))}
        </List>
      </Content>
    </Main>
  );
}

const Scroll = styled.div`
  width: 19px;
  padding: 9px 3px 8px;
  background: #2c2c2c;
  display: flex;
  flex-direction: column;
  justify-content: space-between;
`;

/* ---------- taskbar ---------- */
const Task = styled.div`
  height: 50px;
  flex: none;
  display: flex;
  align-items: stretch;
  color: #fff;
  background: linear-gradient(90deg, #432586 0, #452686 560px, #522a83 700px, #552a84 800px, #5c2c83 900px, #732f7f 1030px, #6b2e80 1120px, #622c80 1230px, #472476 1285px, #4c2880 1350px, #562a80 1430px, #472585 1500px, #432485 1600px, #432485 100%);
`;
const TaskSearch = styled.div`
  width: 360px;
  padding-left: 14px;
  background: #7350be;
  border: 1px solid #8c6fcb;
  display: flex;
  align-items: center;
  color: #e3d9f5;
  font-size: 18px;
`;
const TaskApp = styled.div`
  width: ${p => p.$w}px;
  flex: none;
  display: flex;
  flex-direction: column;
  align-items: center;
  background: ${p => (p.$on ? '#6e42ab' : 'transparent')};
`;
const AppIcon = styled.div`
  height: 47px;
  padding-top: 2px;
  display: flex;
  align-items: center;
`;
const Running = styled.div`
  width: ${p => p.$w}px;
  height: 3px;
  background: #b0a5bb;
`;
const Clock = styled.div`
  width: 76px;
  display: flex;
  flex-direction: column;
  align-items: center;
  justify-content: center;
  font-size: 14.500px;
  line-height: 23px;
`;
const ShowDesktop = styled.div`
  width: 6px;
  border-left: 1px solid #9c8cc0;
`;
const OfficeBox = styled.div`
  width: 29px;
  height: 28px;
  padding-top: 6px;
  background: ${p => p.$art};
`;
const Glyph = styled.div`
  width: 15px;
  height: 16px;
  background: ${p => p.$bg};
  border-radius: 1.500px;
  box-shadow: 1px 1px 1px rgba(0,0,0,.3);
  font: 700 11px/16px ${UI};
  text-align: center;
`;
const Office = ({ l, bg, art }) => <OfficeBox $art={art}><Glyph $bg={bg}>{l}</Glyph></OfficeBox>;
const at = (g, y = 0, h = 28) => `${g} 7px ${y}px / 22px ${h}px no-repeat`;

const excelArt = [
  at('linear-gradient(90deg,#21a366 50%,#33c481 50%)', 0, 7),
  at('linear-gradient(90deg,#107c41 50%,#21a366 50%)', 7, 7),
  at('linear-gradient(90deg,#185c37 50%,#107c41 50%)', 14, 7),
  at('linear-gradient(#185c37,#185c37)', 21, 7),
].join(',');
const noteArt = [
  at('linear-gradient(90deg,#ca64ea 72%,#ae4bd5 72%)', 0, 13),
  at('linear-gradient(90deg,#ca64ea 72%,#9332bf 72%)', 13, 7),
  at('linear-gradient(90deg,#ca64ea 72%,#7719aa 72%)', 20, 8),
].join(',');
const wordArt = at('linear-gradient(#41a5ee 25%,#2b7cd3 25% 50%,#185abd 50% 75%,#103f91 75%)');
const pptArt = 'radial-gradient(circle at 15px 14px, transparent 13.500px, transparent 0), radial-gradient(circle 14px at 15px 14px, #d35230 97%, transparent)';

const apps = [
  [62, 51, <svg width="25" height="30" viewBox="0 0 28 38" preserveAspectRatio="none"><path d="M5 4C12-1 24 3 26 15c1 7-3 11-8 13l-2-4c4-3 6-6 5-10C19 8 12 6 5 9z" fill="#d9400f" /><path d="M5 10c0 6 2 11 6 14" stroke="#c9380f" strokeWidth="2" fill="none" /><path d="M12 3l4-1v24h-4z" fill="#dcdcdc" /><path d="M19 12l2 5-8 10-2-2z" fill="#9c9c9c" /><circle cx="5" cy="28" r="3.500" stroke="#0f64bd" strokeWidth="2.500" fill="none" /><circle cx="16" cy="32.500" r="3.500" stroke="#29a3e8" strokeWidth="2.500" fill="none" /></svg>],
  [62, 51, <Office l="X" bg="#107c41" art={excelArt} />],
  [62, 0, <Office l="N" bg="#7719aa" art={noteArt} />],
  [62, 0, <Office l="W" bg="#185abd" art={wordArt} />],
  [62, 51, <svg width="28" height="25" viewBox="0 0 28 30" preserveAspectRatio="none"><path d="M0 2h11l2 3h15v22H0z" fill="#ffd65c" /><path d="M0 2a1 1 0 0 1 1-1h10l2 3-2 2H0z" fill="#e8a50c" /><path d="M5 29V19a3 3 0 0 1 3-3h12a3 3 0 0 1 3 3v10h-5v-6h-8v6z" fill="#3d97e0" /></svg>],
  [61, 0, <svg width="29" height="28" viewBox="0 0 29 28"><circle cx="15" cy="14" r="14" fill="#d35230" /><path d="M15 0a14 14 0 0 1 14 14H15z" fill="#ff8f6b" /><path d="M15 0v14H1A14 14 0 0 1 15 0z" fill="#ed6c47" /><rect y="6" width="15" height="16" rx="1.500" fill="#c43e1c" /><text x="4" y="18" fontSize="11" fontWeight="700" fill="#fff" fontFamily="Open Sans">P</text></svg>],
  [61, 61, <Chrome s={30} />],
  [64, 0, <svg width="28" height="27" viewBox="0 0 28 33" preserveAspectRatio="none"><rect width="28" height="33" rx="5" fill="#b30b00" /><path d="M6 24c2 3 7-6 8-13 .5-4-3-4-2 0 1 5 5 10 9 10 3-.3 2-3-2-3-4 .2-12 3-13 6z" stroke="#fff" strokeWidth="1.700" fill="none" /></svg>],
  [61, 51, <svg width="30" height="30" viewBox="0 0 30 30"><path d="M22 0L0 19.500l3 2.500L22 7z" fill="#0b6bb5" /><path d="M3 8L0 10.500 22 30v-7z" fill="#1f8ad2" /><path d="M22 0l8 3.500v23L22 30z" fill="#2aa5f2" /></svg>],
  [62, 51, <svg width="27" height="23" viewBox="0 0 28 28" preserveAspectRatio="none"><rect width="28" height="28" fill="#9aa0a5" /><rect x="1.500" y="3.500" width="25" height="23" fill="#050505" /><path d="M1.500 3.500h25C20 9 4 12 1.500 20z" fill="#39393b" /><text x="3" y="10" fontSize="6" fill="#ddd" fontFamily="Liberation Mono">C:\_</text></svg>],
  [62, 51, <svg width="22" height="23" viewBox="-12 -12 24 24"><g fill="#fff">{[0, 45, 90, 135].map(a => <rect key={a} x="-2.500" y="-12" width="5" height="24" rx="1" transform={`rotate(${a})`} />)}<circle r="8.700" /></g><circle r="5" fill="#6b2e80" /></svg>],
];

function Taskbar() {
  return (
    <Task>
      <Slot $w={60}><svg width="20" height="20" viewBox="0 0 20 20" fill="#fff"><path d="M0 3l8.500-1.200v7.700H0zM9.500 1.600L20 0v9.500H9.500zM0 10.500h8.500v7.700L0 17zM9.500 10.500H20V20L9.500 18.400z" /></svg></Slot>
      <TaskSearch>
        <Svg s={20} vb={20} w={1.400}><circle cx="12.700" cy="7.300" r="6.300" /><path d="M8 12l-7.300 7.300" /></Svg>
        <Spacer $w={15} />
        <Fit w={163}>Type here to search</Fit>
      </TaskSearch>
      <Slot $w={60}><Svg s={22} vb={22} w={2.700}><circle cx="11" cy="11" r="8.500" /></Svg></Slot>
      <Spacer $w={3} />
      {apps.map(([w, run, icon], i) => (
        <TaskApp key={i} $w={w} $on={i === 6}><AppIcon>{icon}</AppIcon>{run > 0 && <Running $w={run} />}</TaskApp>
      ))}
      <Spacer />
      <Slot $w={40}><svg width="30" height="28" viewBox="0 0 30 28"><circle cx="13" cy="14" r="12.300" fill="#0a97d9" stroke="#fff" strokeWidth="2" /><path d="M9 10.500c.3-6 9-5 8.500-.3-.3 3-4 3-4 6.300M13.500 19v2.500" stroke="#fff" strokeWidth="3" fill="none" /><circle cx="23" cy="20" r="6" fill="#f5a623" /><path d="M23 19v4.500M23 16v1.500" stroke="#fff" strokeWidth="2" /></svg></Slot>
      <Slot $w={38}><Svg s={16} w={1.400}><path d="M1 11.500l7-7.500 7 7.500" /></Svg></Slot>
      <Slot $w={42}><Svg s={17} w={1.200}><path d="M1 15A14 14 0 0 1 15 1" opacity=".5" /><path d="M4.500 15A10.500 10.500 0 0 1 15 5M8 15A7 7 0 0 1 15 8.500" /><circle cx="13.500" cy="13.500" r="1.500" fill="#fff" stroke="none" /></Svg></Slot>
      <Slot $w={37}><Bt><FaBluetoothB size={15} /></Bt></Slot>
      <Slot $w={43}><Svg s={20} h={12} vb="0 0 20 12" w={1.200}><path d="M1 1h16.500v10H1zM17.500 4h1.500v4h-1.500" strokeLinejoin="miter" /><path d="M3 3h8v6H3z" fill="#fff" stroke="none" /></Svg></Slot>
      <Slot $w={47}><Svg s={21} vb={20} w={1.300}><path d="M7 16L14 3c1-2 4-1 3 1L10 17l-3.500 2zM9 11c-5-1-9 1-8 4s4 3 5 1M13 11c3-2 6-2 6 0 0 1-2 1.500-3 1" /></Svg></Slot>
      <Slot $w={48}><Lang><Fit w={28}>ENG</Fit></Lang></Slot>
      <Spacer $w={6} />
      <Clock><Fit w={35}>15:52</Fit><Fit w={75}>19/09/2025</Fit></Clock>
      <Spacer $w={13} />
      <Slot $w={40}><Svg s={21} vb={20} w={1.300}><path d="M11 16H8.500v3l-3-3H1V1h18v11M13 17c3 0 4-2 5-5 1.500 3 .5 6-5 7z" strokeLinejoin="miter" /></Svg></Slot>
      <Spacer $w={15} />
      <ShowDesktop />
    </Task>
  );
}
const Bt = styled.div`
  width: 16px;
  height: 20px;
  border-radius: 6px;
  background: #0a7cf0;
  display: flex;
  align-items: center;
  justify-content: center;
`;
const Lang = styled.div`
  font-size: 15.500px;
`;

export default function App() {
  return (
    <Screen>
      <Global />
      <TabStrip />
      <Toolbar />
      <Bookmarks />
      <Page>
        <Sidebar />
        <MainPane />
        <Scroll>
          <svg width="13" height="7" viewBox="0 0 13 7"><path d="M6.500 0L13 7H0z" fill="#9f9f9f" /></svg>
          <svg width="13" height="7" viewBox="0 0 13 7"><path d="M6.500 7L13 0H0z" fill="#9f9f9f" /></svg>
        </Scroll>
      </Page>
      <Taskbar />
    </Screen>
  );
}
